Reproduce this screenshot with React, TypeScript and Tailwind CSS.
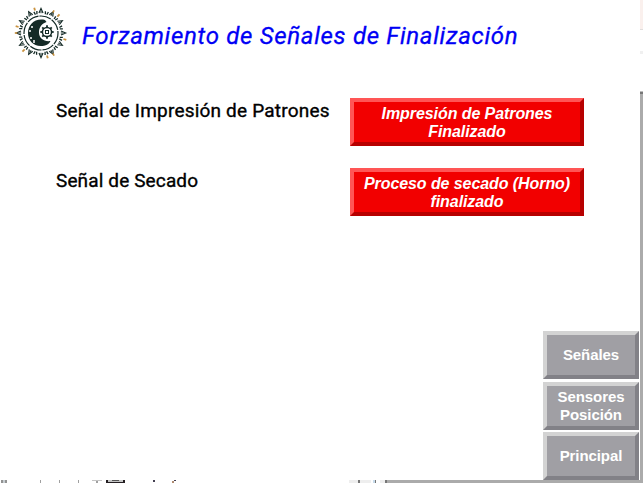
import React from "react";

const rays = Array.from({ length: 24 }, (_, i) => i * 15);
const teeth = Array.from({ length: 8 }, (_, i) => i * 45);

function Logo() {
  return (
    <svg viewBox="0 0 54 54" className="h-[54px] w-[54px]" fill="none" stroke="#142a26">
      {rays.map((a, i) => (
        <g key={a} transform={`rotate(${a} 27 27)`}>
          {i % 2 === 0 ? (
            <>
              <path d="M25 7L27 2.4L29 7" strokeWidth="1.2" />
              <path d="M27 5.2v2" strokeWidth="1" />
            </>
          ) : (
            <path d="M25.6 4.8l.8 3M28.7 4.8l-.8 3" strokeWidth="1.3" />
          )}
          {i % 4 === 3 && <path d="M27 .8v3" stroke="#c9923f" strokeWidth="1.8" />}
          {i % 8 === 2 && <path d="M27 .8v2.6" stroke="#c9923f" strokeWidth="1.6" />}
        </g>
      ))}
      <circle cx="27" cy="27" r="17" strokeWidth="1.2" strokeDasharray="12 1" />
      <path
        d="M31 14C21 11.8 14 18.5 14 27S21 42 31 39.5C34 38.5 35.5 37 36.5 35C30 36 25 32 25 26.5C25 21 28 17.5 32.5 16L31 14Z"
        fill="#142a26"
        stroke="none"
      />
      <path d="M16 24v2M18 20v2M17 31v2M20 34v3" stroke="#fff" strokeWidth="1.5" />
      <circle cx="33" cy="26" r="4.6" strokeWidth="1.5" />
      {teeth.map((a) => (
        <path key={a} d="M33 19.3v2.2" strokeWidth="1.8" transform={`rotate(${a} 33 26)`} />
      ))}
      <rect x="31.5" y="24.5" width="3" height="3" strokeWidth="1" />
    </svg>
  );
}

function StatusButton({ children }: { children: React.ReactNode }) {
  return (
    <button className="h-12 w-[234px] border-4 border-t-[#ff5555] border-r-[#b70000] border-b-[#b70000] border-l-[#ff5555] bg-[#f20000] pt-px text-center font-['Liberation_Sans',Arial,sans-serif] text-[16px] leading-[18px] font-bold tracking-[-0.08px] text-white italic">
      {children}
    </button>
  );
}

function NavButton({ children }: { children: React.ReactNode }) {
  return (
    <button className="h-12 w-24 shrink-0 border-4 border-t-[#d3d3d3] border-r-[#828187] border-b-[#828187] border-l-[#d3d3d3] bg-[#a09fa4] text-center font-['Liberation_Sans',Arial,sans-serif] text-[15px] leading-[18px] font-bold tracking-[-0.08px] text-white">
      {children}
    </button>
  );
}

export default function App() {
  return (
    <div className="flex h-[483px] w-[643px] flex-col overflow-hidden bg-white">
      <div className="flex h-[480px]">
        <main className="flex w-[640px] flex-col font-[Roboto,sans-serif] text-black">
          <header className="flex h-[98px] items-start pt-[6px] pl-[14px]">
            <Logo />
            <h1 className="mt-[14px] ml-[14px] text-[24px] leading-[32px] tracking-[0.7px] whitespace-nowrap text-[#0000f5] italic [-webkit-text-stroke:0.3px_#0000f5]">
              Forzamiento de Señales de Finalización
            </h1>
          </header>
          <section className="flex flex-col gap-[22px] pl-[56px]">
            <div className="flex h-12">
              <p className="w-[294px] text-[19px] leading-[26px] tracking-[0.2px] whitespace-nowrap [-webkit-text-stroke:0.35px_black]">
                Señal de Impresión de Patrones
              </p>
              <StatusButton>Impresión de Patrones<br />Finalizado</StatusButton>
            </div>
            <div className="flex h-12">
              <p className="w-[294px] text-[19px] leading-[26px] tracking-[0.13px] whitespace-nowrap [-webkit-text-stroke:0.35px_black]">
                Señal de Secado
              </p>
              <StatusButton>Proceso de secado (Horno)<br />finalizado</StatusButton>
            </div>
          </section>
          <nav className="mt-auto mr-px flex flex-col items-end">
            <NavButton>Señales</NavButton>
            <div className="h-[3px]" />
            <NavButton>Sensores<br />Posición</NavButton>
            <div className="h-[2px]" />
            <NavButton>Principal</NavButton>
          </nav>
        </main>
        <aside className="flex w-[3px] flex-col">
          <div className="h-[29px] bg-[#faf0ed]" />
          <div className="h-px bg-[#e0dddc]" />
          <div className="h-[21px]" />
          <div className="h-[3px] bg-[#f0f0f0]" />
          <div className="h-[37px]" />
          <div className="h-px bg-[#bcbcbc]" />
          <div className="h-[2px] bg-[#777]" />
          <div className="flex-1 bg-[#ababab]" />
        </aside>
      </div>
      <footer className="flex h-[3px]">
        <svg viewBox="0 0 387 3" className="h-[3px] w-[387px]" shapeRendering="crispEdges">
          <path d="M1 0h2v3h-2zM5 0h2v3h-2z" fill="#929292" />
          <path d="M3 0h2v3h-2z" fill="#c5ccd0" />
          <path d="M40 0h1v3h-1zM59 0h1v3h-1zM78 0h1v3h-1zM96 1h2v2h-2z" fill="#a0a0a0" />
          <path d="M92 0h10v1h-10z" fill="#c5c5c5" />
          <path d="M106 0h19v3h-19z" fill="#241f22" />
          <path d="M108 0h15v2h-15z" fill="#c5c5c5" />
          <path d="M112 0h7v1h-7z" fill="#555" />
          <path d="M153 0h2v2h-2zM174 0h2v1h-2z" fill="#454052" />
          <path d="M172 1h2v2h-2z" fill="#b08b70" />
          <path d="M349 0h22v3h-22zM380 0h5v3h-5z" fill="#eee" />
          <path d="M358 0h2v3h-2zM375 0h1v3h-1zM385 0h2v3h-2z" fill="#777" />
          <path d="M373 0h2v3h-2z" fill="#c8dcec" />
        </svg>
        <div className="flex-1 bg-[#ababab]" />
      </footer>
    </div>
  );
}
